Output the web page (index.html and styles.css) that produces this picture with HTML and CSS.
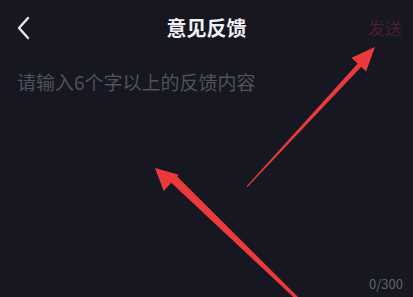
FILE: index.html
```html
<!DOCTYPE html>
<html lang="zh-CN">
<head>
<meta charset="utf-8">
<title>意见反馈</title>
<link rel="stylesheet" href="styles.css">
</head>
<body>
<div class="page">
  <header class="bar">
    <div class="back">
      <svg width="14" height="24" viewBox="0 0 14 24"><path d="M12 2 L3 12 L12 22" fill="none" stroke="#e6e6e9" stroke-width="2.4" stroke-linecap="round" stroke-linejoin="round"/></svg>
    </div>
    <h1 class="title">意见反馈</h1>
    <div class="send">发送</div>
  </header>
  <main class="editor">
    <div class="placeholder">请输入6个字以上的反馈内容</div>
    <div class="count">0/300</div>
  </main>
  <svg class="marks" width="413" height="297" viewBox="0 0 413 297">
    <polygon fill="#ec3a3c" points="246.6,186.3 247.4,187 361.8,66.3 358.2,63"/>
    <polygon fill="#ec3a3c" points="375,47 366.1,71.4 351.5,57.8"/>
    <polygon fill="#ec3a3c" points="167,178.8 296.5,300 299,298 174.4,173.8"/>
    <polygon fill="#ec3a3c" points="155,168 178.7,174.8 163.7,191"/>
  </svg>
</div>
</body>
</html>
```
FILE: styles.css
```css
html, body {
  margin: 0;
  padding: 0;
  background: #161721;
}
.page {
  position: relative;
  width: 413px;
  height: 297px;
  display: flex;
  flex-direction: column;
  overflow: hidden;
  font-family: "Noto Sans CJK SC", "Noto Sans", sans-serif;
}
.bar {
  height: 55px;
  display: grid;
  grid-template-columns: 1fr auto 1fr;
  align-items: center;
}
.back {
  padding-left: 16px;
  display: flex;
  align-items: center;
}
.title {
  margin: 0;
  font-size: 20px;
  font-weight: 700;
  color: #f1f1f3;
  line-height: 24px;
}
.send {
  justify-self: end;
  padding-right: 11px;
  font-size: 17px;
  color: #45202e;
  line-height: 22px;
}
.editor {
  flex: 1;
  display: flex;
  flex-direction: column;
  padding: 14px 10px 5px 17px;
}
.placeholder {
  font-size: 19px;
  line-height: 26px;
  color: #51525c;
  flex: 1;
}
.count {
  align-self: flex-end;
  font-size: 13px;
  line-height: 17px;
  color: #60616b;
}
.marks {
  position: absolute;
  left: 0;
  top: 0;
  pointer-events: none;
}
```
